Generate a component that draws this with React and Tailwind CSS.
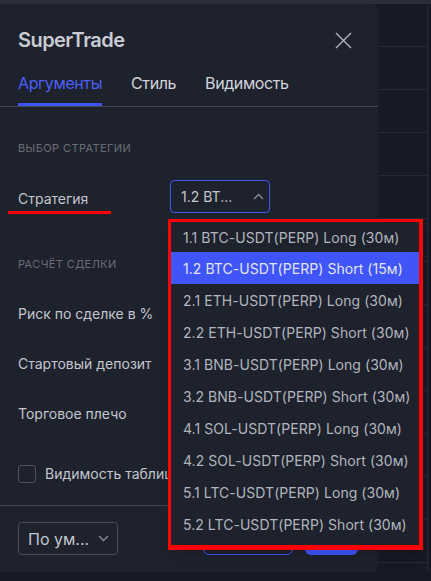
import React from "react";

const items = [
  "1.1 BTC-USDT(PERP) Long (30м)",
  "1.2 BTC-USDT(PERP) Short (15м)",
  "2.1 ETH-USDT(PERP) Long (30м)",
  "2.2 ETH-USDT(PERP) Short (30м)",
  "3.1 BNB-USDT(PERP) Long (30м)",
  "3.2 BNB-USDT(PERP) Short (30м)",
  "4.1 SOL-USDT(PERP) Long (30м)",
  "4.2 SOL-USDT(PERP) Short (30м)",
  "5.1 LTC-USDT(PERP) Long (30м)",
  "5.2 LTC-USDT(PERP) Short (30м)",
];

function Chevron({ up }) {
  return (
    <svg width="11" height="7" viewBox="0 0 11 7" fill="none">
      {up ? (
        <path d="M1 6L5.5 1.5L10 6" stroke="#8a8d98" strokeWidth="1.3" />
      ) : (
        <path d="M1 1L5.5 5.5L10 1" stroke="#8a8d98" strokeWidth="1.3" />
      )}
    </svg>
  );
}

function FieldRow({ label }) {
  return (
    <div className="flex items-center h-[34px] px-[18px]">
      <div className="w-[152px] text-[14px] text-[#c3c6ce]">{label}</div>
      <div className="w-[190px] h-[34px] rounded-[4px] border border-[#434651]" />
    </div>
  );
}

export default function App() {
  return (
    <div className="w-[431px] h-[581px] bg-[#161a25] overflow-hidden relative font-['Inter',sans-serif]">
      <div className="h-[4px] bg-[#2a2e39]" />
      <div className="flex">
        {/* Dialog */}
        <div className="relative w-[378px] h-[568px] shrink-0 bg-[#1e222d] rounded-r-[6px] flex flex-col">
          <div className="h-[60px] pt-[12px] flex items-center justify-between pl-[18px] pr-[26px]">
            <div className="text-[20px] font-semibold text-[#c9ccd4] tracking-[-0.55px]">SuperTrade</div>
            <svg width="17" height="17" viewBox="0 0 17 17" fill="none">
              <path d="M1 1L16 16M16 1L1 16" stroke="#b2b5be" strokeWidth="1.4" />
            </svg>
          </div>
          <div className="h-[43px] border-b border-[#434651] flex px-[18px] gap-[29px] text-[16px] tracking-[-0.4px]">
            <div className="h-[42px] pt-[7px] border-b-[3px] border-[#3f55f7] text-[#4a5ff8]">Аргументы</div>
            <div className="h-[42px] pt-[7px] text-[#d1d4dc]">Стиль</div>
            <div className="h-[42px] pt-[7px] text-[#d1d4dc]">Видимость</div>
          </div>

          <div className="flex-1 flex flex-col">
            <div className="mt-[33px] px-[18px] h-[16px] leading-[16px] text-[11px] tracking-[0.4px] text-[#6a6d78]">ВЫБОР СТРАТЕГИИ</div>
            <div className="mt-[24px] flex items-center h-[33px] px-[18px]">
              <div className="w-[152px] text-[14px] text-[#c3c6ce] pt-[3px]">Стратегия</div>
              <div className="w-[100px] h-[33px] rounded-[4px] border border-[#3f55f7] flex items-center justify-between pl-[10px] pr-[5px] text-[14px] text-[#c3c6ce]">
                <span>1.2 BT...</span>
                <Chevron up />
              </div>
            </div>
            <div className="mt-[43px] px-[18px] h-[16px] leading-[16px] text-[11px] tracking-[0.4px] text-[#6a6d78]">РАСЧЁТ СДЕЛКИ</div>
            <div className="mt-[24px] flex flex-col gap-[16px]">
              <FieldRow label="Риск по сделке в %" />
              <FieldRow label="Стартовый депозит" />
              <FieldRow label="Торговое плечо" />
            </div>
            <div className="mt-[33px] px-[18px] flex items-center gap-[9px]">
              <div className="w-[18px] h-[18px] rounded-[3px] border border-[#50535e]" />
              <div className="text-[14px] text-[#c3c6ce] whitespace-nowrap">Видимость таблицы</div>
            </div>
          </div>

          <div className="h-[67px] border-t border-[#434651] flex items-start pt-[16px] px-[18px]">
            <div className="w-[100px] h-[33px] rounded-[4px] border border-[#4a4d58] flex items-center justify-between pl-[9px] pr-[8px] text-[16px] text-[#c3c6ce]">
              <span>По ум...</span>
              <Chevron />
            </div>
            <div className="ml-[85px] w-[90px] h-[33px] rounded-[6px] border border-[#3f55f7]" />
            <div className="ml-[12px] w-[53px] h-[33px] rounded-[6px] bg-[#3f55f7]" />
          </div>

          {/* red annotation underline */}
          <div className="absolute left-[8px] top-[207px] w-[103px] h-[3px] bg-[#ff0000]" />

          {/* dropdown */}
          <div className="absolute left-[168px] top-[215px] w-[255px] border-[3px] border-r-4 border-b-[5px] border-[#ff0000] bg-[#1e222d] pb-[5px] text-[14px] tracking-[0.05px] text-[#b2b5be] shadow-lg">
            {items.map((t, i) => (
              <div
                key={t}
                className={
                  (i === 0 ? "h-[30px] " : "h-[32px] ") +
                  "flex items-center pl-[12px] whitespace-nowrap " +
                  (i === 1 ? "bg-[#3f55f7] text-[#e3e5f0]" : "")
                }
              >
                {t}
              </div>
            ))}
          </div>
        </div>

        {/* chart background */}
        <div className="flex-1 flex">
          <div className="w-[50px] border-r border-[#262a35] flex flex-col">
            {Array.from({ length: 13 }).map((_, i) => (
              <div key={i} className="h-[43px] shrink-0 border-b border-[#262a35]" />
            ))}
          </div>
        </div>
      </div>
    </div>
  );
}
